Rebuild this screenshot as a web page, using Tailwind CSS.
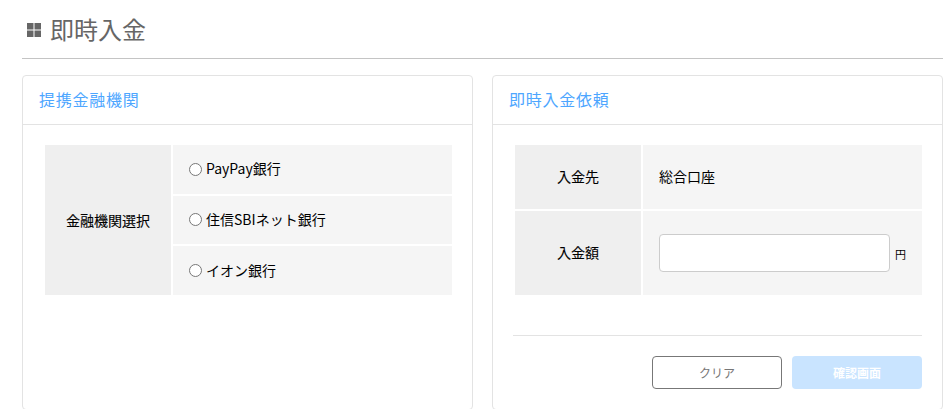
<!DOCTYPE html>
<html lang="ja">
<head>
  <meta charset="UTF-8">
  <meta name="viewport" content="width=device-width, initial-scale=1.0">
  <title>即時入金</title>
  <script src="https://cdn.jsdelivr.net/npm/@tailwindcss/browser@4"></script>
</head>
<body class="h-[409px] overflow-hidden bg-white pl-[22px] pr-px font-['Noto_Sans_CJK_JP',sans-serif] text-sm text-black">
  <h1 class="flex h-[59px] items-center border-b border-[#c4c4c4] pl-[5px] text-2xl leading-none font-normal text-[#666]">
    <svg class="mt-[2px] mr-[9px] h-[14px] w-[14px]" viewBox="0 0 14 14" fill="#666">
      <path d="M0 0h6.5v6.5H0zM7.5 0H14v6.5H7.5zM0 7.5h6.5V14H0zM7.5 7.5H14V14H7.5z" />
    </svg>
    即時入金
  </h1>

  <div class="mt-4 grid grid-cols-2 gap-[19px]">
    <!-- Bank list -->
    <section class="h-[335px] rounded border border-[#e3e3e3]">
      <h2 class="flex h-[49px] items-center border-b border-[#e3e3e3] px-4 pb-[2px] text-base tracking-[0.75px] text-[#4da6ff]">提携金融機関</h2>
      <div class="mx-[22px] mt-5 mr-5 flex h-[150px] gap-[2px]">
        <div class="flex w-[126px] items-center justify-center bg-[#efefef] [-webkit-text-stroke:0.1px]">金融機関選択</div>
        <div class="flex flex-1 flex-col gap-[2px]">
          <label class="flex h-[49px] items-center bg-[#f5f5f5] pl-4">
            <input type="radio" name="bank" class="mr-1 h-[13px] w-[13px]"><span class="pb-[3px]">PayPay銀行</span>
          </label>
          <label class="flex h-12 items-center bg-[#f5f5f5] pb-px pl-4">
            <input type="radio" name="bank" class="mr-1 h-[13px] w-[13px]"><span class="pb-px">住信SBIネット銀行</span>
          </label>
          <label class="flex h-[49px] items-center bg-[#f5f5f5] pl-4">
            <input type="radio" name="bank" class="mr-1 h-[13px] w-[13px]"><span class="pb-[2px]">イオン銀行</span>
          </label>
        </div>
      </div>
    </section>

    <!-- Deposit request -->
    <section class="h-[335px] rounded border border-[#e3e3e3]">
      <h2 class="flex h-[49px] items-center border-b border-[#e3e3e3] px-4 pb-[2px] text-base tracking-[0.75px] text-[#4da6ff]">即時入金依頼</h2>
      <div class="mt-5 mr-5 ml-[22px] grid grid-cols-[126px_1fr] grid-rows-[64px_84px] gap-[2px]">
        <div class="flex items-center justify-center bg-[#efefef] pb-[2px] [-webkit-text-stroke:0.1px]">入金先</div>
        <div class="flex items-center bg-[#f5f5f5] pb-[2px] pl-4">総合口座</div>
        <div class="flex items-center justify-center bg-[#efefef] pb-[2px] [-webkit-text-stroke:0.1px]">入金額</div>
        <div class="flex items-center bg-[#f5f5f5] pl-4 text-[11px]">
          <input type="text" class="mr-[5px] h-[38px] w-[231px] rounded border border-[#ccc] bg-white px-2">
          <span class="mt-1">円</span>
        </div>
      </div>
      <div class="mt-10 mr-5 ml-5 flex justify-end gap-[10px] border-t border-[#e3e3e3] pt-5 text-xs">
        <button type="button" class="h-[33px] w-[130px] rounded border border-[#777] bg-white text-[#777]">クリア</button>
        <button type="button" class="h-[33px] w-[130px] rounded bg-[#c9e4ff] font-bold text-white">確認画面</button>
      </div>
    </section>
  </div>
</body>
</html>
